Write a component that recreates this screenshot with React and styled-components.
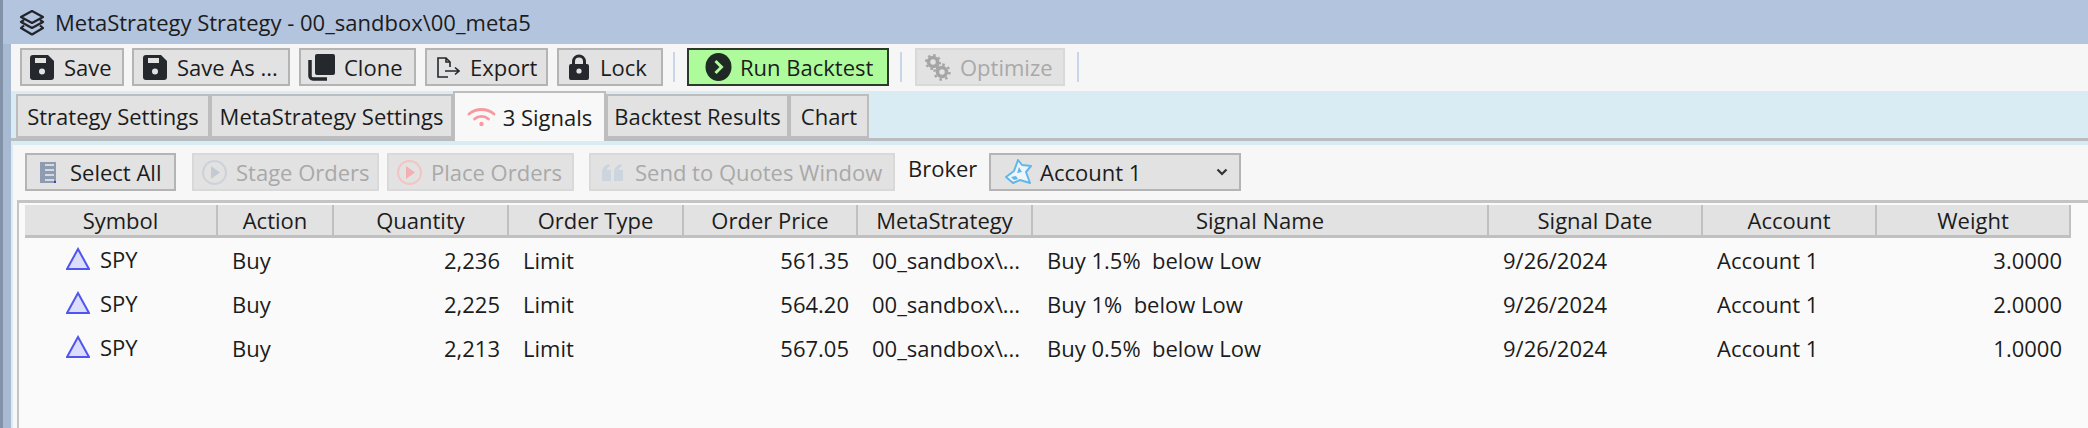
import React from 'react';
import styled, { createGlobalStyle } from 'styled-components';

const GlobalStyle = createGlobalStyle`
  html, body {
    margin: 0;
    padding: 0;
    background: #f7f7f7;
  }
  body {
    font-family: "Open Sans", "Liberation Sans", sans-serif;
    font-size: 22px;
    color: #1c1c1c;
  }
`;

const Window = styled.div`
  width: 2088px;
  height: 428px;
  overflow: hidden;
  display: flex;
  flex-direction: column;
  background: #f7f7f7;
  border-left: 3px solid #8292a8;
  box-sizing: border-box;
`;

const TitleBar = styled.div`
  height: 44px;
  flex: none;
  display: flex;
  align-items: center;
  gap: 9px;
  padding-left: 15px;
  background: #b3c4de;
`;

const Content = styled.div`
  flex: 1;
  display: flex;
  flex-direction: column;
  border-left: 8px solid #a8b9d2;
`;

const Toolbar = styled.div`
  height: 47px;
  flex: none;
  display: flex;
  align-items: flex-start;
  padding: 4px 0 0 9px;
  background: #f6f6f6;
  box-sizing: border-box;
`;

const Button = styled.div`
  box-sizing: border-box;
  width: ${(p) => p.$w}px;
  height: 38px;
  margin-right: ${(p) => p.$gap || 0}px;
  flex: none;
  display: flex;
  align-items: center;
  gap: ${(p) => p.$iconGap || 9}px;
  padding-left: ${(p) => p.$pad || 8}px;
  background: ${(p) => (p.$run ? '#aefb9c' : '#e2e2e2')};
  border: ${(p) =>
    p.$run ? '2px solid #2b3a2b' : p.$off ? '2px solid #d9d9d9' : '2px solid #b4b4b4'};
  color: ${(p) => (p.$off ? '#a9a9a9' : '#1c1c1c')};
  white-space: nowrap;
`;

const Separator = styled.div`
  width: 2px;
  height: 30px;
  margin: 4px ${(p) => p.$right}px 0 ${(p) => p.$left}px;
  flex: none;
  background: #c9d5e8;
`;

const TabStrip = styled.div`
  height: 50px;
  flex: none;
  display: flex;
  align-items: flex-end;
  padding-left: 5px;
  box-sizing: border-box;
  background: #daecf3;
  border-bottom: 3px solid #b9bdc0;
`;

const Tab = styled.div`
  box-sizing: border-box;
  width: ${(p) => p.$w}px;
  height: ${(p) => (p.$active ? 50 : 44)}px;
  margin-bottom: ${(p) => (p.$active ? -3 : 0)}px;
  flex: none;
  display: flex;
  align-items: center;
  justify-content: center;
  gap: 7px;
  background: ${(p) => (p.$active ? '#f8f8f8' : '#e2e2e2')};
  border: 2px solid #bdbdbd;
  border-bottom: ${(p) => (p.$active ? 'none' : '2px solid #bdbdbd')};
  white-space: nowrap;
  z-index: ${(p) => (p.$active ? 1 : 0)};
`;

const Body = styled.div`
  flex: 1;
  display: flex;
  flex-direction: column;
  border-top: 4px solid #daecf3;
  border-left: 2px solid #dceaf3;
  background: #f7f7f7;
`;

const Actions = styled.div`
  height: 46px;
  flex: none;
  display: flex;
  align-items: flex-end;
  padding-left: 12px;
  box-sizing: border-box;
`;

const BrokerLabel = styled.div`
  width: 94px;
  flex: none;
  align-self: flex-start;
  padding: 8px 0 0 13px;
  box-sizing: border-box;
`;

const Grid = styled.div`
  flex: 1;
  margin: 9px 0 0 4px;
  padding-left: 6px;
  background: #fafafa;
  border-top: 3px solid #c4c4c4;
  border-left: 2px solid #c4c4c4;
`;

const columns = '193px 116px 175px 175px 174px 175px 456px 214px 174px 194px';

const HeaderRow = styled.div`
  display: grid;
  grid-template-columns: ${columns};
  height: 33px;
  margin-top: 2px;
  box-sizing: border-box;
  border-bottom: 3px solid #c0c0c0;
  background: #e2e2e2;
  width: 2046px;
`;

const HeaderCell = styled.div`
  display: flex;
  align-items: center;
  justify-content: center;
  border-right: 2px solid #c0c0c0;
  box-sizing: border-box;
  white-space: nowrap;
  line-height: 1;
`;

const DataRow = styled.div`
  display: grid;
  grid-template-columns: ${columns};
  height: 44px;
  align-items: center;
  width: 2046px;
`;

const Cell = styled.div`
  box-sizing: border-box;
  white-space: pre;
  text-align: ${(p) => (p.$right ? 'right' : 'left')};
  padding: 0 ${(p) => (p.$right ? 9 : 0)}px 0 ${(p) => (p.$right ? 0 : 14)}px;
`;

const SymbolCell = styled.div`
  display: flex;
  align-items: center;
  gap: 10px;
  padding: 0 0 3px 41px;
`;

const DropChevron = styled.div`
  margin-left: auto;
  margin-right: 11px;
  display: flex;
`;

const SaveIcon = () => (
  <svg width="24" height="25" viewBox="0 0 24 25">
    <path d="M3 0h15l6 6v16a3 3 0 0 1-3 3H3a3 3 0 0 1-3-3V3a3 3 0 0 1 3-3z" fill="#25282c" />
    <rect x="5" y="3" width="11" height="5" fill="#e2e2e2" />
    <circle cx="12" cy="16.500" r="3" fill="#e2e2e2" />
  </svg>
);

const CloneIcon = () => (
  <svg width="27" height="27" viewBox="0 0 27 27">
    <path d="M2 6v16a3 3 0 0 0 3 3h14" fill="none" stroke="#25282c" strokeWidth="3.500" />
    <rect x="7" y="0" width="20" height="21" rx="2" fill="#25282c" />
  </svg>
);

const ExportIcon = () => (
  <svg width="23" height="21" viewBox="0 0 23 21" fill="none" stroke="#25282c" strokeWidth="1.600">
    <path d="M11 20H1V1h8l4 4v5" />
    <path d="M9 1v4h4" />
    <path d="M8 14h14M18 10.500l4 3.500-4 3.500" />
  </svg>
);

const LockIcon = () => (
  <svg width="24" height="26" viewBox="0 0 24 26">
    <path d="M6.500 12V7.500a5.500 5.500 0 0 1 11 0V12" fill="none" stroke="#25282c" strokeWidth="3" />
    <rect x="2" y="10" width="20" height="16" rx="2" fill="#25282c" />
    <circle cx="12" cy="17" r="2.600" fill="#e2e2e2" />
  </svg>
);

const RunIcon = () => (
  <svg width="27" height="28" viewBox="0 0 27 28">
    <ellipse cx="13.500" cy="14" rx="13" ry="14" fill="#1f2a24" />
    <path d="M10.500 8l6 6-6 6" fill="none" stroke="#aefb9c" strokeWidth="3" />
  </svg>
);

const GearsIcon = () => (
  <svg width="27" height="28" viewBox="0 0 27 28" fill="none" stroke="#a5a5a5">
    <circle cx="9" cy="9" r="4.500" strokeWidth="3.500" />
    <circle cx="9" cy="9" r="7" strokeWidth="2" strokeDasharray="2.500 3" />
    <circle cx="18" cy="19" r="4.500" strokeWidth="3.500" />
    <circle cx="18" cy="19" r="7.500" strokeWidth="2.400" strokeDasharray="2.500 3.400" />
  </svg>
);

const LayersIcon = () => (
  <svg width="28" height="27" viewBox="0 0 28 27" fill="none" stroke="#20242a" strokeWidth="2.200" strokeLinejoin="round">
    <path d="M14 2l11 6-11 6L3 8z" />
    <path d="M6 11l-3 2 11 6 11-6-3-2" />
    <path d="M6 16.500l-3 2.500 11 6.500 11-6.500-3-2.500" />
  </svg>
);

const WifiIcon = () => (
  <svg width="29" height="19" viewBox="0 0 29 19" fill="none" stroke="#f79aa0" strokeWidth="2.800" strokeLinecap="round">
    <path d="M2 6c7-6 18-6 25 0" />
    <path d="M7.500 11c4-3.500 10-3.500 14 0" />
    <circle cx="14.500" cy="16" r="2.200" fill="#f79aa0" stroke="none" />
  </svg>
);

const ListIcon = () => (
  <svg width="16" height="21" viewBox="0 0 16 21">
    <rect width="16" height="21" fill="#8e9bb0" />
    {[2, 7, 12, 17].map((y) => (
      <rect key={y} x="5" y={y} width="9" height="2" fill="#d4dae2" />
    ))}
    <rect x="14" y="19" width="2" height="2" fill="#3048c8" />
  </svg>
);

const PlayCircleIcon = ({ color, fill }) => (
  <svg width="25" height="25" viewBox="0 0 25 25" fill="none">
    <circle cx="12.500" cy="12.500" r="11.500" stroke={color} strokeWidth="2" />
    <path d="M9 6l9 6.500L9 19z" fill={fill} />
  </svg>
);

const QuotesIcon = () => (
  <svg width="21" height="17" viewBox="0 0 21 17" fill="#ccd4de">
    <path d="M0 8c0-4 3-7 7-8l1 2c-2 1-3 2-3 4h4v11H0z" />
    <path d="M12 8c0-4 3-7 7-8l1 2c-2 1-3 2-3 4h4v11h-9z" />
  </svg>
);

const AccountIcon = () => (
  <svg width="27" height="26" viewBox="0 0 27 26">
    <path d="M13 1l4 5 9 1-5 6 4 11-10-3-7 3-7-6 8-6z" fill="#eef6fb" stroke="#62b6ea" strokeWidth="2" strokeLinejoin="round" />
    <path d="M14 8l3 5-5 1zM6 18l5-1 2 3-4 1z" fill="#62b6ea" />
  </svg>
);

const ChevronIcon = () => (
  <svg width="12" height="9" viewBox="0 0 12 9" fill="none" stroke="#333" strokeWidth="2.200">
    <path d="M1.500 1.500l4.500 4.500 4.500-4.500" />
  </svg>
);

const TriangleIcon = () => (
  <svg width="24" height="23" viewBox="0 0 24 23">
    <path d="M12 2L23 22H1z" fill="#dcdcfb" stroke="#4f55f0" strokeWidth="2" />
  </svg>
);

const headers = ['Symbol', 'Action', 'Quantity', 'Order Type', 'Order Price', 'MetaStrategy', 'Signal Name', 'Signal Date', 'Account', 'Weight'];

const orders = [
  { qty: '2,236', price: '561.35', signal: 'Buy 1.5%  below Low', weight: '3.0000' },
  { qty: '2,225', price: '564.20', signal: 'Buy 1%  below Low', weight: '2.0000' },
  { qty: '2,213', price: '567.05', signal: 'Buy 0.5%  below Low', weight: '1.0000' },
];

const App = () => {
  return (
    <>
      <GlobalStyle />
      <Window>
        <TitleBar>
          <LayersIcon />
          MetaStrategy Strategy - 00_sandbox\00_meta5
        </TitleBar>
        <Content>
          <Toolbar>
            <Button $w={104} $gap={8} $iconGap={10}><SaveIcon />Save</Button>
            <Button $w={158} $gap={9} $iconGap={10} $pad={9}><SaveIcon />Save As ...</Button>
            <Button $w={117} $gap={9} $pad={7}><CloneIcon />Clone</Button>
            <Button $w={123} $gap={9} $pad={10} $iconGap={10}><ExportIcon />Export</Button>
            <Button $w={106} $pad={8}><LockIcon />Lock</Button>
            <Separator $left={10} $right={12} />
            <Button $w={202} $run $pad={16} $iconGap={8}><RunIcon />Run Backtest</Button>
            <Separator $left={11} $right={13} />
            <Button $w={150} $off $pad={7}><GearsIcon />Optimize</Button>
            <Separator $left={12} $right={0} />
          </Toolbar>
          <TabStrip>
            <Tab $w={194}>Strategy Settings</Tab>
            <Tab $w={243}>MetaStrategy Settings</Tab>
            <Tab $w={153} $active><WifiIcon />3 Signals</Tab>
            <Tab $w={183}>Backtest Results</Tab>
            <Tab $w={80}>Chart</Tab>
          </TabStrip>
          <Body>
            <Actions>
              <Button $w={151} $gap={16} $pad={13} $iconGap={14}><ListIcon />Select All</Button>
              <Button $w={187} $gap={8} $off><PlayCircleIcon color="#cdd2da" fill="#c4cad4" />Stage Orders</Button>
              <Button $w={187} $gap={15} $off><PlayCircleIcon color="#f3c4c4" fill="#f3b0b0" />Place Orders</Button>
              <Button $w={306} $off $pad={11} $iconGap={12}><QuotesIcon />Send to Quotes Window</Button>
              <BrokerLabel>Broker</BrokerLabel>
              <Button $w={252} $pad={14} $iconGap={8}>
                <AccountIcon />Account 1
                <DropChevron><ChevronIcon /></DropChevron>
              </Button>
            </Actions>
            <Grid>
              <HeaderRow>
                {headers.map((h) => <HeaderCell key={h}>{h}</HeaderCell>)}
              </HeaderRow>
              {orders.map((o) => (
                <DataRow key={o.qty}>
                  <SymbolCell><TriangleIcon />SPY</SymbolCell>
                  <Cell>Buy</Cell>
                  <Cell $right>{o.qty}</Cell>
                  <Cell>Limit</Cell>
                  <Cell $right>{o.price}</Cell>
                  <Cell>00_sandbox\...</Cell>
                  <Cell>{o.signal}</Cell>
                  <Cell>9/26/2024</Cell>
                  <Cell>Account 1</Cell>
                  <Cell $right>{o.weight}</Cell>
                </DataRow>
              ))}
            </Grid>
          </Body>
        </Content>
      </Window>
    </>
  );
};

export default App;
